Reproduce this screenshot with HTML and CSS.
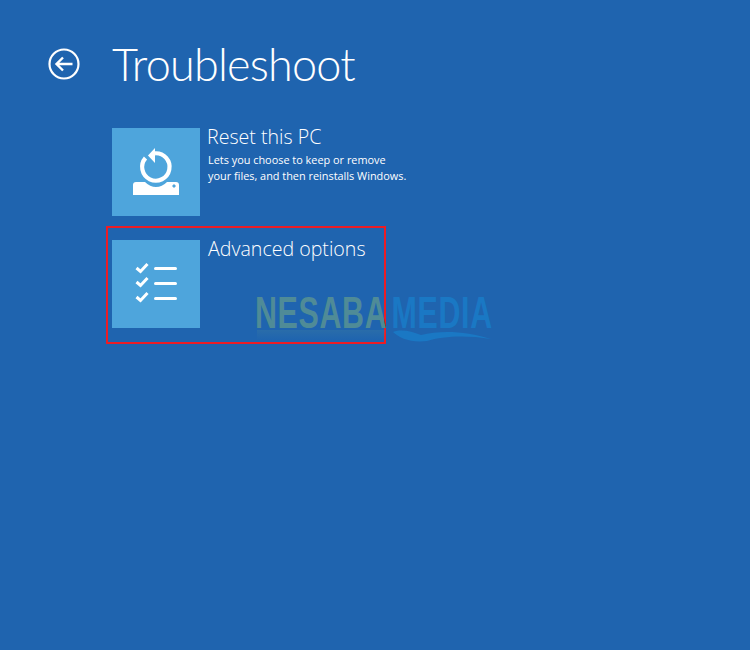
FILE: index.html
```html
<!DOCTYPE html>
<html>
<head>
    <title>Troubleshoot</title>
    <link rel="stylesheet" href="styles.css">
</head>
<body>
    <div class="header">
        <svg class="back" width="32" height="32" viewBox="0 0 32 32">
            <circle cx="16" cy="16" r="14.5" fill="none" stroke="#fff" stroke-width="2.2"/>
            <path d="M24.5 16H8.5M15 9.5L8.5 16L15 22.5" fill="none" stroke="#fff" stroke-width="2.4"/>
        </svg>
        <h1>Troubleshoot</h1>
    </div>

    <div class="options">
        <div class="option">
            <div class="tile">
                <svg width="88" height="88" viewBox="0 0 88 88">
                    <path d="M43 25.300A13.700 13.700 0 1 1 33.500 30" fill="none" stroke="#fff" stroke-width="4.200"/>
                    <path d="M43 20V35L36 27.500Z" fill="#fff"/>
                    <path d="M21 67V57Q21 54 24 54H33Q38 59 44 59T55 54H64Q67 54 67 57V67Z" fill="#fff"/>
                    <path d="M61 56.500h2v1h1v1h-1v1h-2v-1h-1v-1h1z" fill="#4ea5dc"/>
                </svg>
            </div>
            <div class="info">
                <div class="name">Reset this PC</div>
                <p class="desc">Lets you choose to keep or remove<br>your files, and then reinstalls Windows.</p>
            </div>
        </div>

        <div class="option">
            <div class="tile">
                <svg width="88" height="88" viewBox="0 0 88 88">
                    <g fill="none" stroke="#fff" stroke-width="3">
                        <path d="M24.500 28L28.500 31.500L35.500 24"/>
                        <path d="M24.500 42L28.500 45.500L35.500 38"/>
                        <path d="M24.500 57L28.500 60.500L35.500 53"/>
                    </g>
                    <g fill="#fff">
                        <rect x="42" y="27" width="23" height="3" rx="1.500"/>
                        <rect x="42" y="42" width="23" height="3" rx="1.500"/>
                        <rect x="42" y="57" width="23" height="3" rx="1.500"/>
                    </g>
                </svg>
            </div>
            <div class="info second">
                <div class="name">Advanced options</div>
            </div>
        </div>
    </div>

    <div class="highlight"></div>

    <div class="watermark">
        <div class="mark-text"><span class="mark-a">NESABA</span><span class="mark-b">MEDIA</span></div>
        <div class="reflect"></div>
        <svg class="wave" width="104" height="14" viewBox="0 0 104 14">
            <path d="M2 3C10 0 20 2 30 6C50 1 75 2 100 10C75 6 52 7 36 12C20 14 8 9 2 3Z" fill="#1a78c4"/>
        </svg>
    </div>
</body>
</html>
```

FILE: styles.css
```css
body {
    font-family: "Open Sans", "Noto Sans", sans-serif;
    background-color: #1f64af;
    color: #fff;
    margin: 0;
    padding: 0;
    height: 650px;
    overflow: hidden;
    position: relative;
}

.header {
    display: flex;
    align-items: center;
    padding: 36px 0 0 48px;
    height: 56px;
}

.back {
    margin-right: 32px;
}

h1 {
    font-family: Lato, "Open Sans", sans-serif;
    font-size: 45px;
    font-weight: 300;
    letter-spacing: -0.8px;
    margin: 0;
    line-height: 56px;
}

.options {
    display: flex;
    flex-direction: column;
    gap: 24px;
    padding: 36px 0 0 112px;
}

.option {
    display: flex;
    height: 88px;
}

.tile {
    width: 88px;
    height: 88px;
    background-color: #4ea5dc;
    display: flex;
    align-items: center;
    justify-content: center;
}

.info {
    margin-left: 7px;
}

.info.second {
    margin-left: 8px;
}

.name {
    font-size: 19.6px;
    font-weight: 300;
    line-height: 20px;
    margin-top: -1px;
}

.desc {
    font-size: 10.9px;
    line-height: 16px;
    margin: 5px 0 0 1px;
}

.highlight {
    position: absolute;
    left: 106px;
    top: 226px;
    width: 276px;
    height: 114px;
    border: 2px solid #ed1c24;
}

.watermark {
    position: absolute;
    left: 255px;
    top: 291px;
}

.mark-text {
    font-family: "Liberation Sans", sans-serif;
    font-size: 44px;
    font-weight: bold;
    line-height: 44px;
    letter-spacing: 1px;
    transform: scaleX(0.69);
    transform-origin: left;
    white-space: nowrap;
}

.mark-a {
    color: #4f8b97;
}

.mark-b {
    color: #1a78c4;
    margin-left: 6px;
}

.reflect {
    position: absolute;
    left: 2px;
    top: 39px;
    width: 128px;
    height: 10px;
    background: linear-gradient(rgba(79, 139, 151, 0.22), rgba(79, 139, 151, 0));
}

.wave {
    position: absolute;
    left: 136px;
    top: 38px;
}
```
